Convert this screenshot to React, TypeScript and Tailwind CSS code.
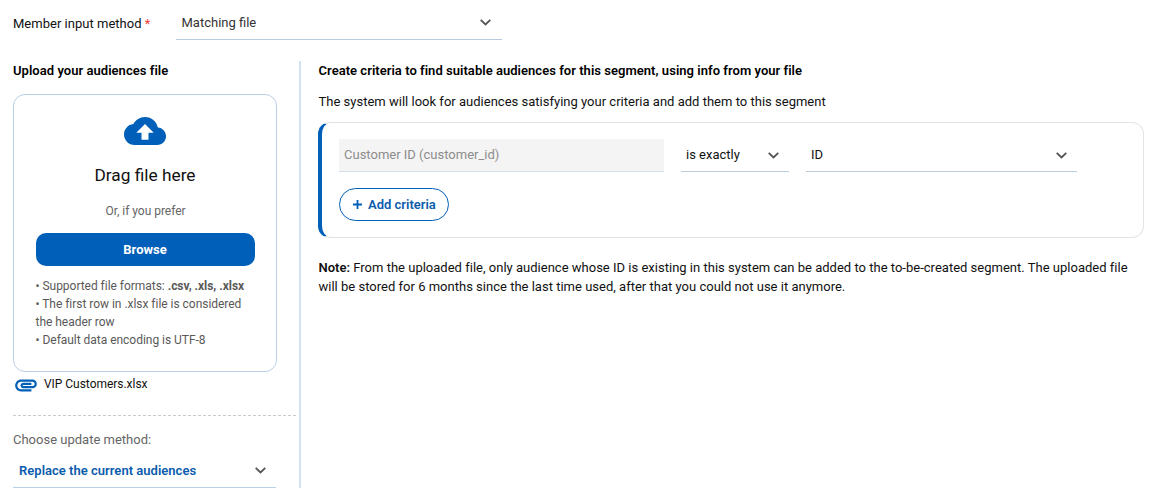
import React from "react";

function Chevron({ className = "" }: { className?: string }) {
  return (
    <svg className={`h-[7px] w-[11px] shrink-0 ${className}`} viewBox="0 0 11 7" fill="none" stroke="#555" strokeWidth="1.8">
      <path d="M0.7 0.8 5.5 5.5 10.3 0.8" />
    </svg>
  );
}

function CloudUpload() {
  return (
    <svg className="size-[42px]" viewBox="0 0 24 24" fill="#005fb8">
      <path d="M19.35 10.04C18.67 6.59 15.64 4 12 4 9.11 4 6.6 5.64 5.35 8.04 2.34 8.36 0 10.91 0 14c0 3.31 2.69 6 6 6h13c2.76 0 5-2.24 5-5 0-2.64-2.05-4.78-4.65-4.96zM14 13v4h-4v-4H7l5-5 5 5h-3z" />
    </svg>
  );
}

function Attachment() {
  return (
    <svg className="h-[26px] w-[26px] shrink-0" viewBox="0 0 24 24" fill="#005fb8">
      <path d="M2 12.5C2 9.46 4.46 7 7.5 7H18c2.21 0 4 1.79 4 4s-1.79 4-4 4H9.5C8.12 15 7 13.88 7 12.5S8.12 10 9.5 10H17v2H9.41c-.55 0-.55 1 0 1H18c1.1 0 2-.9 2-2s-.9-2-2-2H7.5C5.57 9 4 10.57 4 12.5S5.57 16 7.5 16H17v2H7.5C4.46 18 2 15.54 2 12.5z" />
    </svg>
  );
}

function UploadCard() {
  return (
    <div className="mt-[15px] flex h-[278px] w-[264px] flex-col items-center rounded-xl border border-[#b8cfe6] px-[22px] pt-[15px]">
      <CloudUpload />
      <div className="mt-[11px] text-[17.3px] leading-6 whitespace-nowrap">Drag file here</div>
      <div className="mt-[15px] pl-px text-[12px] leading-[18px] tracking-[-0.03px] whitespace-nowrap text-[#666]">Or, if you prefer</div>
      <button className="mt-[13px] h-[33px] w-[219px] rounded-[10px] bg-[#005fb8] text-[13px] font-bold text-white">
        Browse
      </button>
      <div className="mt-[11px] w-[219px] text-[12px] leading-[18px] tracking-[-0.03px] whitespace-nowrap text-[#595959]">
        <div>• Supported file formats: <b>.csv, .xls, .xlsx</b></div>
        <div>• The first row in .xlsx file is considered<br />the header row</div>
        <div>• Default data encoding is UTF-8</div>
      </div>
    </div>
  );
}

function CriteriaCard() {
  return (
    <div className="mt-[10px] h-[116px] w-[826px] rounded-xl border border-l-4 border-[#e3e3e3] border-l-[#005fb8] pt-4 pl-[17px]">
      <div className="flex gap-[17px]">
        <div className="flex h-[33px] w-[325px] items-center border-b border-[#d2deeb] bg-[#f4f4f4] px-[5px] text-[#8c8c8c]">
          Customer ID (customer_id)
        </div>
        <div className="flex h-[33px] w-[108px] items-center justify-between border-b border-[#b8cbdf] pr-[10px] pl-[5px]">
          is exactly
          <Chevron />
        </div>
        <div className="flex h-[33px] w-[271px] items-center justify-between border-b border-[#b8cbdf] pr-[10px] pl-[5px]">
          ID
          <Chevron />
        </div>
      </div>
      <button className="mt-4 flex h-[33px] w-[110px] items-center rounded-full border border-[#005fb8] pl-[13px] font-semibold text-[#0b5cad]">
        <svg className="mr-[6px] size-[9px]" viewBox="0 0 9 9" stroke="#005fb8" strokeWidth="1.8">
          <path d="M4.5 0V9M0 4.5H9" />
        </svg>
        Add criteria
      </button>
    </div>
  );
}

export default function App() {
  return (
    <div className="h-[498px] w-[1154px] overflow-hidden bg-white pl-[13px] font-['Roboto',sans-serif] text-[13px] leading-5 text-[#111]">
      <div className="flex h-[61px]">
        <div className="w-[163px] pt-[14px] tracking-[0.02px]">
          Member input method <span className="text-[#f44336]">*</span>
        </div>
        <div className="flex h-10 w-[326px] items-center justify-between border-b border-[#b8cbdf] pt-[6px] pr-[11px] pl-[5.5px] text-[#333]">
          Matching file
          <Chevron />
        </div>
      </div>
      <div className="flex h-[427px]">
        <div className="flex w-[286px] flex-col">
          <div className="h-[18px] font-semibold tracking-[0.04px] text-black">Upload your audiences file</div>
          <UploadCard />
          <div className="flex h-[44px] w-[283px] border-b border-dashed border-[#cacaca]">
            <Attachment />
            <span className="pt-0.5 pl-[5px] text-[12px] tracking-[-0.03px]">VIP Customers.xlsx</span>
          </div>
          <div className="mt-[14px] text-[#666]">Choose update method:</div>
          <div className="mt-1 flex h-[34px] w-[263px] items-center justify-between border-b border-[#b8cfe6] pr-[10px] pl-[6px] font-semibold tracking-[0.02px] text-[#0b5cad]">
            Replace the current audiences
            <Chevron />
          </div>
        </div>
        <div className="w-[2px] bg-[#d3e1f1]" />
        <div className="pl-[17px] whitespace-nowrap">
          <div className="pl-[0.5px] font-semibold tracking-[0.035px] text-black">
            Create criteria to find suitable audiences for this segment, using info from your file
          </div>
          <div className="mt-[11px] pl-[0.5px] tracking-[0.01px]">
            The system will look for audiences satisfying your criteria and add them to this segment
          </div>
          <CriteriaCard />
          <div className="mt-5 pl-[0.5px] leading-[19px] tracking-[0.01px]">
            <b className="font-semibold">Note:</b> From the uploaded file, only audience whose ID is existing in this system can be added to the to-be-created segment. The uploaded file
            <br />
            will be stored for 6 months since the last time used, after that you could not use it anymore.
          </div>
        </div>
      </div>
    </div>
  );
}
